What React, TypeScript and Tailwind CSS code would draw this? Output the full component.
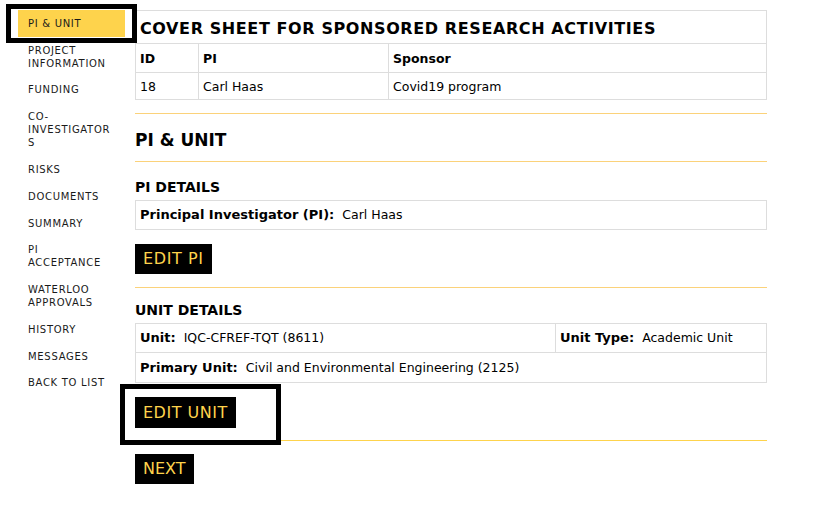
import React from "react";

const navItems = [
  "PI & UNIT",
  "PROJECT INFORMATION",
  "FUNDING",
  "CO-INVESTIGATORS",
  "RISKS",
  "DOCUMENTS",
  "SUMMARY",
  "PI ACCEPTANCE",
  "WATERLOO APPROVALS",
  "HISTORY",
  "MESSAGES",
  "BACK TO LIST",
];

function Sidebar({ active }: { active: string }) {
  return (
    <nav className="w-[135px] shrink-0 pt-[10px] pl-[18px]">
      <ul className="w-[107px]">
        {navItems.map((item) => (
          <li
            key={item}
            className={
              "py-[6.9px] pl-[10px] pr-[12px] text-[10px] leading-[13px] tracking-[0.7px] break-words text-[#1a1a1a] " +
              (item === active ? "bg-[#fed34c]" : "")
            }
          >
            {item}
          </li>
        ))}
      </ul>
    </nav>
  );
}

function Rule({ bright }: { bright?: boolean }) {
  return (
    <hr
      className={
        "w-full border-0 border-t " + (bright ? "border-[#fed34c]" : "border-[#fbd27a]")
      }
    />
  );
}

function ActionButton({ label, className = "" }: { label: string; className?: string }) {
  return (
    <button
      className={
        "h-[30px] bg-black px-[8px] text-[16px] leading-[30px] text-[#fed34c] " + className
      }
    >
      {label}
    </button>
  );
}

export default function App() {
  return (
    <div className="relative flex min-h-[526px] w-[839px] bg-white font-['DejaVu_Sans',Verdana,sans-serif] text-black">
      <Sidebar active="PI & UNIT" />

      <main className="w-[632px] pt-[10px]">
        <table className="w-full border-collapse border border-[#dddddd] text-[12.5px]">
          <thead>
            <tr className="h-[33px]">
              <th
                colSpan={3}
                className="border border-[#dddddd] px-[4px] pt-[4px] text-left text-[16px] font-bold tracking-[0.6px]"
              >
                COVER SHEET FOR SPONSORED RESEARCH ACTIVITIES
              </th>
            </tr>
            <tr className="h-[29px]">
              <th className="w-[63px] border border-[#dddddd] px-[4px] pt-[3px] text-left font-bold">ID</th>
              <th className="w-[190px] border border-[#dddddd] px-[4px] pt-[3px] text-left font-bold">PI</th>
              <th className="border border-[#dddddd] px-[4px] pt-[3px] text-left font-bold">Sponsor</th>
            </tr>
          </thead>
          <tbody>
            <tr className="h-[27px]">
              <td className="border border-[#dddddd] px-[4px] pt-[2px]">18</td>
              <td className="border border-[#dddddd] px-[4px] pt-[2px]">Carl Haas</td>
              <td className="border border-[#dddddd] px-[4px] pt-[2px]">Covid19 program</td>
            </tr>
          </tbody>
        </table>

        <div className="mt-[13px]">
          <Rule />
        </div>
        <h2 className="flex h-[47px] items-center pt-[6px] text-[17px] font-bold">PI &amp; UNIT</h2>
        <Rule />

        <h3 className="mt-[18px] text-[14px] font-bold leading-[14px]">PI DETAILS</h3>
        <table className="mt-[6px] w-full border-collapse border border-[#dddddd] text-[12.5px]">
          <tbody>
            <tr className="h-[29px]">
              <td className="border border-[#dddddd] px-[4px]">
                <span className="text-[13px] font-bold">Principal Investigator (PI):</span>
                <span className="ml-[8px]">Carl Haas</span>
              </td>
            </tr>
          </tbody>
        </table>

        <div className="mt-[14px] flex">
          <ActionButton label="EDIT PI" className="tracking-[0.6px]" />
        </div>

        <div className="mt-[13px]">
          <Rule />
        </div>

        <h3 className="mt-[15px] text-[14px] font-bold leading-[14px]">UNIT DETAILS</h3>
        <table className="mt-[6px] w-full border-collapse border border-[#dddddd] text-[12.5px]">
          <tbody>
            <tr className="h-[29px]">
              <td className="border border-[#dddddd] px-[4px]">
                <span className="text-[13px] font-bold">Unit:</span>
                <span className="ml-[8px]">IQC-CFREF-TQT (8611)</span>
              </td>
              <td className="w-[211px] border border-[#dddddd] px-[4px]">
                <span className="text-[13px] font-bold">Unit Type:</span>
                <span className="ml-[8px]">Academic Unit</span>
              </td>
            </tr>
            <tr className="h-[30px]">
              <td colSpan={2} className="border border-[#dddddd] px-[4px]">
                <span className="text-[13px] font-bold">Primary Unit:</span>
                <span className="ml-[8px]">Civil and Environmental Engineering (2125)</span>
              </td>
            </tr>
          </tbody>
        </table>

        <div className="mt-[14px] flex">
          <ActionButton label="EDIT UNIT" className="h-[31px] tracking-[0.5px]" />
        </div>

        <div className="mt-[12px]">
          <Rule bright />
        </div>

        <div className="mt-[13px] flex">
          <ActionButton label="NEXT" />
        </div>
      </main>

      {/* annotation boxes drawn over the screenshot */}
      <div className="pointer-events-none absolute left-[6px] top-[4px] h-[39px] w-[131px] border-[5px] border-black" />
      <div className="pointer-events-none absolute left-[120px] top-[384px] h-[61px] w-[161px] border-[5px] border-black" />
    </div>
  );
}
